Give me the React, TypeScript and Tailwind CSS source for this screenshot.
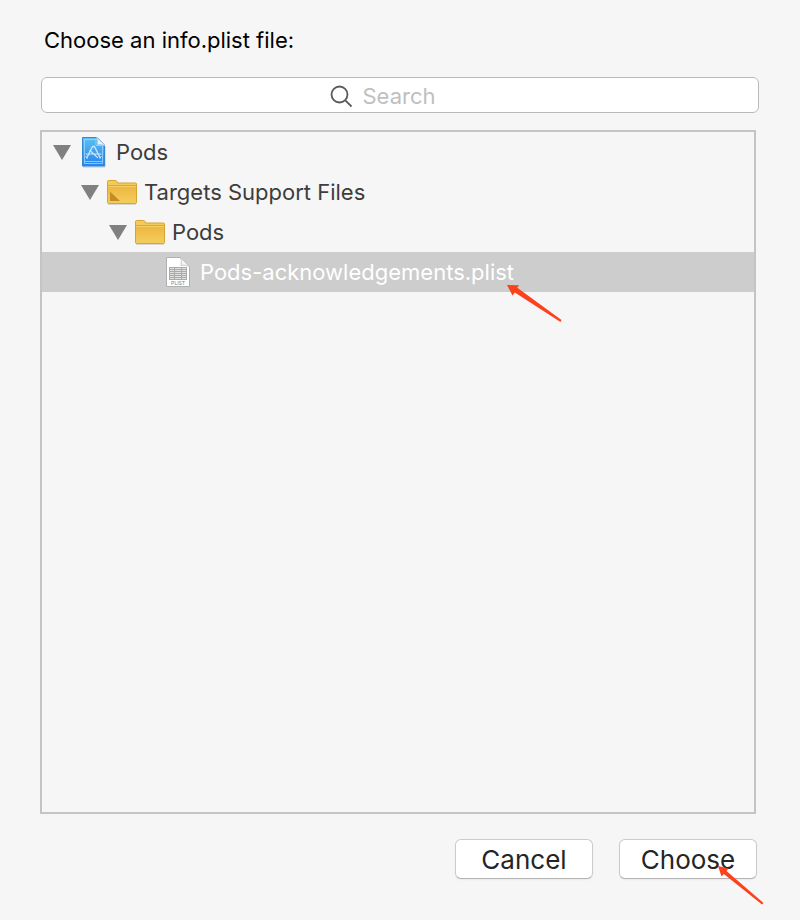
import { useState } from 'react';
import type { ReactNode } from 'react';

type FileKind = 'project' | 'group' | 'folder' | 'plist';

interface TreeItem {
  id: string;
  name: string;
  kind: FileKind;
  indent: string;
  expandable: boolean;
}

const items: TreeItem[] = [
  { id: 'project', name: 'Pods', kind: 'project', indent: 'pl-[11px]', expandable: true },
  { id: 'support', name: 'Targets Support Files', kind: 'group', indent: 'pl-[39px]', expandable: true },
  { id: 'pods', name: 'Pods', kind: 'folder', indent: 'pl-[67px]', expandable: true },
  { id: 'plist', name: 'Pods-acknowledgements.plist', kind: 'plist', indent: 'pl-[95px]', expandable: false },
];

const ProjectIcon = () => (
  <svg width="26" height="32" viewBox="0 0 26 32" aria-hidden="true">
    <defs>
      <linearGradient id="project-fill" x1="0" y1="0" x2="0" y2="1">
        <stop offset="0" stopColor="#5cc0f3" />
        <stop offset="1" stopColor="#2583ee" />
      </linearGradient>
    </defs>
    <path d="M2 2.5H16.5L24 10V31H2Z" fill="none" stroke="#c3c6ca" />
    <path d="M1.5 1.5H16L23.5 9V30H1.5Z" fill="url(#project-fill)" stroke="#2f8bda" />
    <path d="M3.5 3.5H15V9.5H21.5V27.5H3.5Z" fill="none" stroke="#a5d6f8" strokeWidth="0.8" />
    <path d="M3.5 25.5H21.5" stroke="#a5d6f8" strokeWidth="0.8" />
    <path d="M15.5 1.5Q17.5 5 16.5 8.5Q20 8 24 9.5Z" fill="#eff4f8" stroke="#b9cfdf" strokeWidth="0.6" />
    <g fill="none" stroke="#c9e6fb" strokeWidth="1.4" strokeLinecap="round">
      <path d="M11.5 10.5L6 21.5M13.5 10.5L19 21.5M11.5 10.5H13.5" />
      <path d="M5 18H20M9 14.5L16.5 21.5" strokeWidth="1.1" />
      <path d="M4.8 20.5L6.2 22.5M18.8 22.5L20.2 20.5" strokeWidth="1" />
    </g>
  </svg>
);

const FolderIcon = ({ marked = false }: { marked?: boolean }) => (
  <svg width="30" height="26" viewBox="0 0 30 26" aria-hidden="true">
    <defs>
      <linearGradient id="folder-fill" x1="0" y1="0" x2="0" y2="1">
        <stop offset="0" stopColor="#edb73f" />
        <stop offset="1" stopColor="#f4cc5c" />
      </linearGradient>
    </defs>
    <path d="M1 25.3H29" stroke="#d2d0cb" />
    <path
      d="M0.5 2.5Q0.5 1.5 1.5 1.5H8.5Q9.5 1.5 10 2.5L10.5 4H28.5Q29.5 4 29.5 5V23.5Q29.5 24.5 28.5 24.5H1.5Q0.5 24.5 0.5 23.5Z"
      fill="#f3cb58"
      stroke="#d9a42f"
    />
    <path d="M1 7H29V23.5H1Z" fill="url(#folder-fill)" />
    <path d="M1 6.5H29" stroke="#dba735" />
    <path d="M1 7.5H29" stroke="#f5cf69" />
    {marked && <path d="M3 12.5V22H13Z" fill="#c68a26" />}
  </svg>
);

const PlistIcon = () => (
  <svg width="26" height="32" viewBox="0 0 26 32" aria-hidden="true">
    <path d="M1.5 1.5H15.5L24.5 10.5V30.5H1.5Z" fill="#fff" stroke="#b0b0b0" />
    <path d="M15.5 1.5Q17 5 16 9.5Q20 8.5 24.5 10.5Z" fill="#f4f4f4" stroke="#bdbdbd" strokeWidth="0.8" />
    <path d="M4 11H22V24H4Z" fill="#ababab" />
    <path
      d="M5 12.5H9M10 12.5H16M17 12.5H21M5 14.5H9M10 14.5H16M17 14.5H21M5 16.5H9M10 16.5H16M17 16.5H21M5 18.5H9M10 18.5H16M17 18.5H21M5 20.5H9M10 20.5H16M17 20.5H21M5 22.5H9M10 22.5H16M17 22.5H21"
      stroke="#e0e0e0"
    />
    <text x="13" y="29" textAnchor="middle" fontSize="5" fill="#7d7d7d" className="font-['Liberation_Sans',sans-serif]">
      PLIST
    </text>
  </svg>
);

const icons: Record<FileKind, ReactNode> = {
  project: <ProjectIcon />,
  group: <FolderIcon marked />,
  folder: <FolderIcon />,
  plist: <PlistIcon />,
};

export default function App() {
  const [query, setQuery] = useState('');
  const [selected, setSelected] = useState('plist');

  return (
    <main className="flex min-h-screen flex-col bg-[#f6f6f6] pt-6 pr-11 pb-[41px] pl-10 font-['Inter','Liberation_Sans',sans-serif] text-[22px]">
      <label htmlFor="file-search" className="pl-1 leading-8 text-black">
        Choose an info.plist file:
      </label>

      {/* Search */}
      <div className="mt-[21px] -mr-[3px] ml-px flex h-9 items-center justify-center gap-[10px] rounded-md border border-[#bababa] bg-white">
        <svg width="23" height="23" viewBox="0 0 23 23" fill="none" stroke="#5a5a5a" strokeWidth="1.8" className="mt-0.5" aria-hidden="true">
          <circle cx="9.5" cy="9.5" r="8" />
          <path d="M15.3 15.3L21.5 21.5" />
        </svg>
        <input
          id="file-search"
          type="text"
          placeholder="Search"
          value={query}
          onChange={(e) => setQuery(e.target.value)}
          className="h-8 w-[108px] pt-0.5 text-black outline-none placeholder:text-[#bfbfbf]"
        />
      </div>

      {/* File tree */}
      <ul className="mt-[17px] flex-1 border-2 border-[#c4c4c4]">
        {items.map((item) => (
          <li key={item.id} className={`relative ${selected === item.id ? 'bg-[#cdcdcd] text-white' : 'text-[#3d3d3d]'}`}>
            <button
              type="button"
              onClick={() => setSelected(item.id)}
              className={`flex h-10 w-full items-center gap-[7px] text-left ${item.indent}`}
            >
              <svg width="19" height="15" viewBox="0 0 19 15" className="shrink-0" aria-hidden="true">
                {item.expandable && <path d="M0 0H18L9 15Z" fill="#808080" />}
              </svg>
              <span className="flex w-[30px] shrink-0 justify-center">{icons[item.kind]}</span>
              <span className="whitespace-nowrap">{item.name}</span>
            </button>
            {item.kind === 'plist' && (
              <svg width="56" height="40" viewBox="0 0 56 40" className="pointer-events-none absolute top-8 left-[464px] z-10" aria-hidden="true">
                <path d="M1 1L13 1.3L11.3 3.8L55.5 36L54.5 38L8.8 8.5L6.5 11.5Z" fill="#fc421d" />
              </svg>
            )}
          </li>
        ))}
      </ul>

      {/* Actions */}
      <div className="mt-[25px] -mr-px flex justify-end gap-[26px] text-[26px] text-[#252525]">
        <button type="button" className="h-10 w-[138px] rounded-md border border-[#cbcbcb] border-b-[#b3b3b3] bg-white pb-0.5 shadow-xs">
          Cancel
        </button>
        <button type="button" className="relative h-10 w-[138px] rounded-md border border-[#cbcbcb] border-b-[#b3b3b3] bg-white pb-0.5 shadow-xs">
          Choose
          <svg width="50" height="42" viewBox="0 0 50 42" className="pointer-events-none absolute top-[25px] left-[97px]" aria-hidden="true">
            <path d="M1 1L11.5 3.5L9.5 6L46.5 38L45 39.5L6.8 9L4.5 11.5Z" fill="#fc421d" />
          </svg>
        </button>
      </div>
    </main>
  );
}
